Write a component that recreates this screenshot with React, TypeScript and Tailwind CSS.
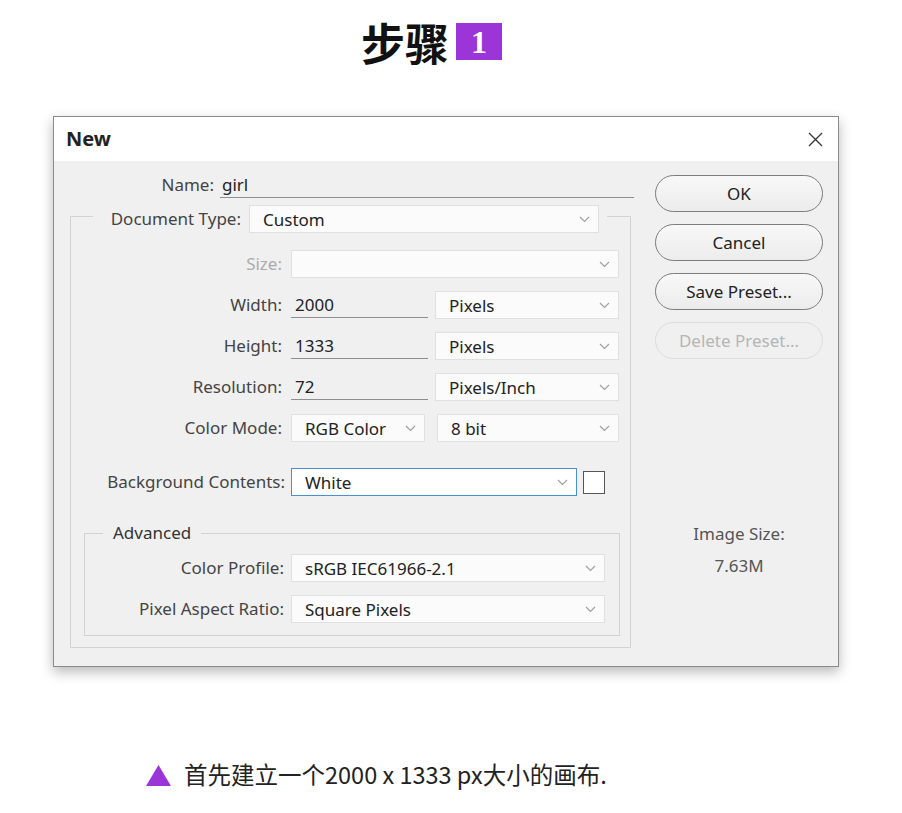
import React from "react";

const ui = { fontFamily: '"Noto Sans", "Open Sans", sans-serif' };

function Chevron() {
  return (
    <svg width="11" height="7" viewBox="0 0 11 7" className="shrink-0">
      <path d="M1 1 L5.5 5.5 L10 1" fill="none" stroke="#a0a0a0" strokeWidth="1.2" />
    </svg>
  );
}

function Dropdown({ value, w, blue }: { value?: string; w: string; blue?: boolean }) {
  return (
    <div
      className={`${w} h-[28px] flex items-center justify-between pl-[13px] pr-[8px] ${
        blue ? "border border-[#4a8fd0] bg-white" : "border border-[#e0e0e0] bg-[#fbfbfb]"
      }`}
    >
      <span className="text-[17px] text-[#222] leading-none">{value}</span>
      <Chevron />
    </div>
  );
}

function Field({ value, w }: { value: string; w: string }) {
  return (
    <div className={`${w} h-[26px] border-b border-[#8e8e8e] flex items-center pl-[4px] text-[17px] text-[#222]`}>
      {value}
    </div>
  );
}

function Label({ text, w, disabled }: { text: string; w: string; disabled?: boolean }) {
  return (
    <div className={`${w} shrink-0 text-right text-[17px] ${disabled ? "text-[#ababab]" : "text-[#444]"}`}>
      {text}
    </div>
  );
}

function Button({ text, disabled }: { text: string; disabled?: boolean }) {
  return (
    <div
      className={`h-[37px] rounded-full flex items-center justify-center text-[17px] ${
        disabled
          ? "border border-[#dddddd] bg-[#f0f0f0] text-[#b5b5b5]"
          : "border border-[#7c7c7c] bg-gradient-to-b from-[#f8f8f8] to-[#ececec] text-[#222]"
      }`}
    >
      {text}
    </div>
  );
}

export default function App() {
  return (
    <div className="w-[902px] h-[813px] bg-white overflow-hidden">
      {/* Title */}
      <div className="mt-[23px] h-[37px] flex items-center pl-[361px] gap-[7px]">
        <span
          className="text-[44px] font-bold leading-none text-[#111]"
          style={{ fontFamily: '"Noto Sans CJK SC", sans-serif' }}
        >
          步骤
        </span>
        <span
          className="w-[46px] h-[37px] bg-[#9b35d8] flex items-center justify-center text-white text-[32px] font-bold leading-none"
          style={{ fontFamily: '"Liberation Serif", serif' }}
        >
          1
        </span>
      </div>

      {/* Dialog */}
      <div
        className="mt-[56px] ml-[53px] w-[786px] h-[551px] border border-[#8a8a8a] flex flex-col shadow-[0_5px_12px_rgba(0,0,0,0.28)]"
        style={ui}
      >
        <div className="h-[44px] bg-white flex items-center justify-between pl-[12px] pr-[15px] shrink-0">
          <span className="text-[20px] font-bold text-[#222]">New</span>
          <svg width="15" height="15" viewBox="0 0 15 15">
            <path d="M1 1 L14 14 M14 1 L1 14" stroke="#333" strokeWidth="1.3" fill="none" />
          </svg>
        </div>
        <div className="flex-1 bg-[#f0f0f0] flex">
          {/* Left column */}
          <div className="w-[590px] flex flex-col">
            <div className="mt-[11px] h-[26px] flex items-center">
              <Label text="Name:" w="w-[160px]" />
              <div className="ml-[6px] w-[414px] h-[26px] border-b border-[#8e8e8e] flex items-center pl-[2px] text-[17px] text-[#222]">
                girl
              </div>
            </div>

            <fieldset className="mt-[1px] ml-[16px] w-[561px] border border-[#d2d2d2] p-0 pb-[11px]">
              <legend className="ml-[22px] p-0">
                <div className="flex items-center pt-[6px] pr-[8px]">
                  <Label text="Document Type:" w="w-[148px]" />
                  <div className="ml-[8px]">
                    <Dropdown value="Custom" w="w-[350px]" />
                  </div>
                </div>
              </legend>

              <div className="mt-[17px] flex flex-col gap-[13px]">
                <div className="h-[28px] flex items-center">
                  <Label text="Size:" w="w-[211px]" disabled />
                  <div className="ml-[9px]">
                    <Dropdown w="w-[328px]" />
                  </div>
                </div>
                <div className="h-[28px] flex items-center">
                  <Label text="Width:" w="w-[211px]" />
                  <div className="ml-[9px]">
                    <Field value="2000" w="w-[137px]" />
                  </div>
                  <div className="ml-[7px]">
                    <Dropdown value="Pixels" w="w-[184px]" />
                  </div>
                </div>
                <div className="h-[28px] flex items-center">
                  <Label text="Height:" w="w-[211px]" />
                  <div className="ml-[9px]">
                    <Field value="1333" w="w-[137px]" />
                  </div>
                  <div className="ml-[7px]">
                    <Dropdown value="Pixels" w="w-[184px]" />
                  </div>
                </div>
                <div className="h-[28px] flex items-center">
                  <Label text="Resolution:" w="w-[211px]" />
                  <div className="ml-[9px]">
                    <Field value="72" w="w-[137px]" />
                  </div>
                  <div className="ml-[7px]">
                    <Dropdown value="Pixels/Inch" w="w-[184px]" />
                  </div>
                </div>
                <div className="h-[28px] flex items-center">
                  <Label text="Color Mode:" w="w-[211px]" />
                  <div className="ml-[9px]">
                    <Dropdown value="RGB Color" w="w-[134px]" />
                  </div>
                  <div className="ml-[12px]">
                    <Dropdown value="8 bit" w="w-[182px]" />
                  </div>
                </div>
              </div>

              <div className="mt-[26px] h-[28px] flex items-center">
                <Label text="Background Contents:" w="w-[214px]" />
                <div className="ml-[6px]">
                  <Dropdown value="White" w="w-[286px]" blue />
                </div>
                <div className="ml-[6px] w-[22px] h-[23px] border border-[#555] bg-white" />
              </div>

              <fieldset className="mt-[26px] ml-[13px] w-[536px] border border-[#d2d2d2] p-0 pb-[12px]">
                <legend className="ml-[18px] px-[10px] text-[17px] text-[#333] leading-[22px]">Advanced</legend>
                <div className="mt-[10px] flex flex-col gap-[13px]">
                  <div className="h-[28px] flex items-center">
                    <Label text="Color Profile:" w="w-[199px]" />
                    <div className="ml-[7px]">
                      <Dropdown value="sRGB IEC61966-2.1" w="w-[314px]" />
                    </div>
                  </div>
                  <div className="h-[28px] flex items-center">
                    <Label text="Pixel Aspect Ratio:" w="w-[199px]" />
                    <div className="ml-[7px]">
                      <Dropdown value="Square Pixels" w="w-[314px]" />
                    </div>
                  </div>
                </div>
              </fieldset>
            </fieldset>
          </div>

          {/* Right column */}
          <div className="ml-[11px] w-[168px] pt-[14px] flex flex-col">
            <div className="flex flex-col gap-[12px]">
              <Button text="OK" />
              <Button text="Cancel" />
              <Button text="Save Preset..." />
              <Button text="Delete Preset..." disabled />
            </div>
            <div className="mt-[164px] text-center text-[17px] text-[#555] leading-[22px]">Image Size:</div>
            <div className="mt-[10px] text-center text-[17px] text-[#555] leading-[22px]">7.63M</div>
          </div>
        </div>
      </div>

      {/* Caption */}
      <div className="mt-[93px] ml-[146px] flex items-center h-[30px]">
        <svg width="25" height="21" viewBox="0 0 25 21" className="shrink-0">
          <path d="M12.5 0 L25 21 L0 21 Z" fill="#9b35d8" />
        </svg>
        <span
          className="ml-[13px] text-[23.5px] text-[#222] leading-none"
          style={{ fontFamily: '"Noto Sans CJK SC", sans-serif' }}
        >
          首先建立一个2000 x 1333 px大小的画布.
        </span>
      </div>
    </div>
  );
}
